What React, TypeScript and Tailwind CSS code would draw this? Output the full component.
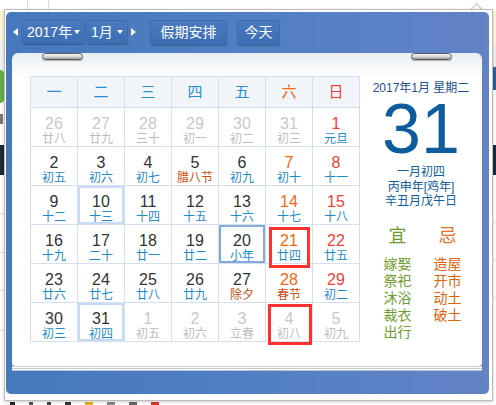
import React from "react";

type Kind = "o" | "c";
type Cell = { n: number; l: string; k: Kind; fest?: boolean; mark?: "light" | "sel" };

const c = (n: number, l: string, k: Kind = "c", extra: Partial<Cell> = {}): Cell => ({ n, l, k, ...extra });

const rows: Cell[][] = [
  [c(26, "廿八", "o"), c(27, "廿九", "o"), c(28, "三十", "o"), c(29, "初一", "o"), c(30, "初二", "o"), c(31, "初三", "o"), c(1, "元旦")],
  [c(2, "初五"), c(3, "初六"), c(4, "初七"), c(5, "腊八节", "c", { fest: true }), c(6, "初九"), c(7, "初十"), c(8, "十一")],
  [c(9, "十二"), c(10, "十三", "c", { mark: "light" }), c(11, "十四"), c(12, "十五"), c(13, "十六"), c(14, "十七"), c(15, "十八")],
  [c(16, "十九"), c(17, "二十"), c(18, "廿一"), c(19, "廿二"), c(20, "小年", "c", { mark: "sel" }), c(21, "廿四"), c(22, "廿五")],
  [c(23, "廿六"), c(24, "廿七"), c(25, "廿八"), c(26, "廿九"), c(27, "除夕", "c", { fest: true }), c(28, "春节", "c", { fest: true }), c(29, "初二")],
  [c(30, "初三"), c(31, "初四", "c", { mark: "light" }), c(1, "初五", "o"), c(2, "初六", "o"), c(3, "立春", "o"), c(4, "初八", "o"), c(5, "初九", "o")],
];

const weekNames = ["一", "二", "三", "四", "五", "六", "日"];

function numColor(cell: Cell, col: number) {
  if (cell.k === "o") return "text-[#c9c9c9]";
  if (col === 5) return "text-[#f4660f]";
  if (col === 6) return "text-[#f2403a]";
  return "text-[#333333]";
}

function lunarColor(cell: Cell) {
  if (cell.k === "o") return "text-[#bdbdbd]";
  if (cell.fest) return "text-[#c64f10]";
  return "text-[#1f8ac8]";
}

function HeaderButton({ children, className = "" }: { children: React.ReactNode; className?: string }) {
  return (
    <div
      className={`flex h-[24px] items-center rounded-[3px] border border-[#3d6cae] bg-gradient-to-b from-[#4a7bc0] to-[#3d6db3] text-[14px] text-white shadow-[0_1px_1px_rgba(0,0,0,0.25)] ${className}`}
    >
      {children}
    </div>
  );
}

function Caret() {
  return <span className="ml-auto mr-[4px] h-0 w-0 border-x-[3.5px] border-t-[4px] border-x-transparent border-t-white" />;
}

function Clip({ className }: { className: string }) {
  return (
    <div
      className={`absolute top-[0px] h-[7px] w-[41px] rounded-full border border-[#5c5c5c] bg-gradient-to-b from-[#f7f7f7] via-[#d9d9d9] to-[#9a9a9a] shadow-[0_1px_1px_rgba(0,0,0,0.3)] ${className}`}
    />
  );
}

export default function App() {
  return (
    <div className="relative h-[405px] w-[496px] overflow-hidden bg-white font-['Liberation_Sans','Noto_Sans_CJK_SC',sans-serif]">
      {/* page behind the popup */}
      <div className="absolute left-[27px] top-0 h-[9px] w-px bg-[#dddddd]" />
      <div className="absolute left-[48px] top-0 h-[9px] w-px bg-[#dddddd]" />
      <div className="absolute left-0 top-[10px] h-[30px] w-[4px] bg-[#fbf5d8]" />
      <div className="absolute left-0 top-[40px] h-[30px] w-[4px] bg-[#f1f1f1]" />
      <div className="absolute left-0 top-[70px] h-[33px] w-[4px] rounded-r bg-[#62ad45]" />
      <div className="absolute left-0 top-[114px] h-[10px] w-[3px] bg-[#777777]" />
      <div className="absolute left-0 top-[145px] h-[30px] w-[4px] bg-[#1c2a39]" />
      <div className="absolute left-0 top-[213px] h-px w-[4px] bg-[#dddddd]" />
      <div className="absolute left-0 top-[252px] h-px w-[4px] bg-[#dddddd]" />
      <div className="absolute left-0 top-[290px] h-px w-[4px] bg-[#dddddd]" />
      <div className="absolute left-0 top-[330px] h-px w-[4px] bg-[#dddddd]" />
      <div className="absolute right-0 top-[10px] h-[35px] w-[4px] bg-[#fcf6da]" />
      <div className="absolute right-0 top-[45px] h-[22px] w-[4px] bg-[#eeeeee]" />
      <div className="absolute right-0 top-[67px] h-[23px] w-[4px] bg-[#2c5e9f]" />
      <div className="absolute right-0 top-[145px] h-[30px] w-[4px] bg-[#1d2936]" />
      <div className="absolute right-0 top-[222px] h-px w-[4px] bg-[#dddddd]" />
      <div className="absolute right-0 top-[260px] h-px w-[4px] bg-[#dddddd]" />
      <div className="absolute right-0 top-[297px] h-px w-[4px] bg-[#dddddd]" />
      <div className="absolute bottom-0 left-[10px] flex h-[4px] items-end gap-[14px]">
        <span className="h-[3px] w-[5px] bg-[#222]" />
        <span className="h-[3px] w-[4px] bg-[#555]" />
        <span className="h-[3px] w-[4px] bg-[#444]" />
        <span className="h-[3px] w-[6px] bg-[#333]" />
        <span className="h-[3px] w-[8px] bg-[#e0b020]" />
        <span className="h-[3px] w-[8px] bg-[#888]" />
        <span className="h-[3px] w-[8px] bg-[#666]" />
        <span className="h-[3px] w-[8px] bg-[#d33]" />
      </div>

      {/* popup pointer */}
      <div className="absolute left-[472px] top-[5px] h-[9px] w-[9px] rotate-45 border-l border-t border-[#bdbdbd] bg-white" />

      {/* popup */}
      <div className="absolute left-[4px] top-[9px] h-[392px] w-[489px] border border-[#bdbdbd] bg-white pb-[6px] pl-[1px] pr-[3px] pt-[2px] shadow-[0_1px_3px_rgba(0,0,0,0.2)]">
        <div className="flex h-full flex-col rounded-[5px] bg-gradient-to-r from-[#4678bd] via-[#5080c3] to-[#6283c6]">
          {/* toolbar */}
          <div className="flex h-[41px] shrink-0 items-start pl-[7px] pt-[8px]">
            <span className="mt-[8px] h-0 w-0 border-y-[4px] border-r-[5px] border-y-transparent border-r-white" />
            <HeaderButton className="ml-[4px] w-[63px] pl-[4px]">
              2017年
              <Caret />
            </HeaderButton>
            <HeaderButton className="ml-[1px] w-[42px] pl-[4px]">
              1月
              <Caret />
            </HeaderButton>
            <span className="ml-[3px] mt-[8px] h-0 w-0 border-y-[4px] border-l-[5px] border-y-transparent border-l-white" />
            <HeaderButton className="ml-[14px] h-[25px] w-[77px] justify-center">假期安排</HeaderButton>
            <HeaderButton className="ml-[10px] h-[25px] w-[43px] justify-center">今天</HeaderButton>
          </div>

          {/* calendar sheet */}
          <div className="ml-[6px] mr-[7px] shadow-[0_1px_0_#c8ced8,0_2px_0_#ffffff,0_3px_0_#c3c9d3,0_4px_0_#ffffff,0_5px_0_#bcc3ce]">
            <div className="relative flex h-[313px] rounded-t-[6px] rounded-b-[3px] bg-gradient-to-b from-[#e9eef4] via-white via-[8%] to-white">
              <Clip className="left-[30px]" />
              <Clip className="left-[399px]" />

              {/* grid */}
              <div className="relative ml-[18px] mt-[23px] self-start">
                <div className="grid grid-cols-[repeat(7,46px)] gap-px bg-[#d4e0ee] p-px">
                  {weekNames.map((w, i) => (
                    <div
                      key={w}
                      className={`flex h-[30px] items-center justify-center bg-[#f1f4f8] text-[15px] ${
                        i === 5 ? "text-[#f4660f]" : i === 6 ? "text-[#f2403a]" : "text-[#2a8fcf]"
                      }`}
                    >
                      {w}
                    </div>
                  ))}
                  {rows.map((row, r) =>
                    row.map((cell, i) => (
                      <div
                        key={`${r}-${i}`}
                        className={`flex h-[38px] flex-col items-center bg-white pt-[7px] ${
                          cell.mark === "light"
                            ? "shadow-[inset_0_0_0_2px_#c7dbf4]"
                            : cell.mark === "sel"
                              ? "shadow-[inset_0_0_0_2px_#84a9dc]"
                              : ""
                        }`}
                      >
                        <span className={`text-[16px] leading-[18px] ${numColor(cell, i)}`}>{cell.n}</span>
                        <span className={`text-[12px] leading-[13px] ${lunarColor(cell)}`}>{cell.l}</span>
                      </div>
                    ))
                  )}
                </div>
                {/* red marks */}
                <div className="absolute left-[239px] top-[151px] h-[41px] w-[41px] border-[3px] border-[#ff3030]" />
                <div className="absolute left-[238px] top-[228px] h-[41px] w-[44px] border-[3px] border-[#ff3030]" />
              </div>

              {/* day detail */}
              <div className="flex flex-1 flex-col items-center">
                <div className="mt-[27px] text-[12px] leading-[16px] text-[#1d4f8c]">2017年1月 星期二</div>
                <div className="mt-[3px] text-[70px] leading-[60px] text-[#0d5c9e]">31</div>
                <div className="mt-[6px] flex flex-col items-center text-[12px] leading-[14.5px] text-[#0d5c9e]">
                  <span>一月初四</span>
                  <span>丙申年[鸡年]</span>
                  <span>辛丑月戊午日</span>
                </div>
                <div className="ml-[3px] mt-[17px] grid grid-cols-[50px_50px] text-center">
                  <span className="text-[18px] leading-[20px] text-[#6b9a30]">宜</span>
                  <span className="text-[18px] leading-[20px] text-[#e8702a]">忌</span>
                  <div className="mt-[10px] flex flex-col text-[14px] leading-[17px] text-[#6f9b2e]">
                    <span>嫁娶</span>
                    <span>祭祀</span>
                    <span>沐浴</span>
                    <span>裁衣</span>
                    <span>出行</span>
                  </div>
                  <div className="mt-[10px] flex flex-col text-[14px] leading-[17px] text-[#e0620c]">
                    <span>造屋</span>
                    <span>开市</span>
                    <span>动土</span>
                    <span>破土</span>
                  </div>
                </div>
              </div>
            </div>
          </div>
        </div>
      </div>
    </div>
  );
}
